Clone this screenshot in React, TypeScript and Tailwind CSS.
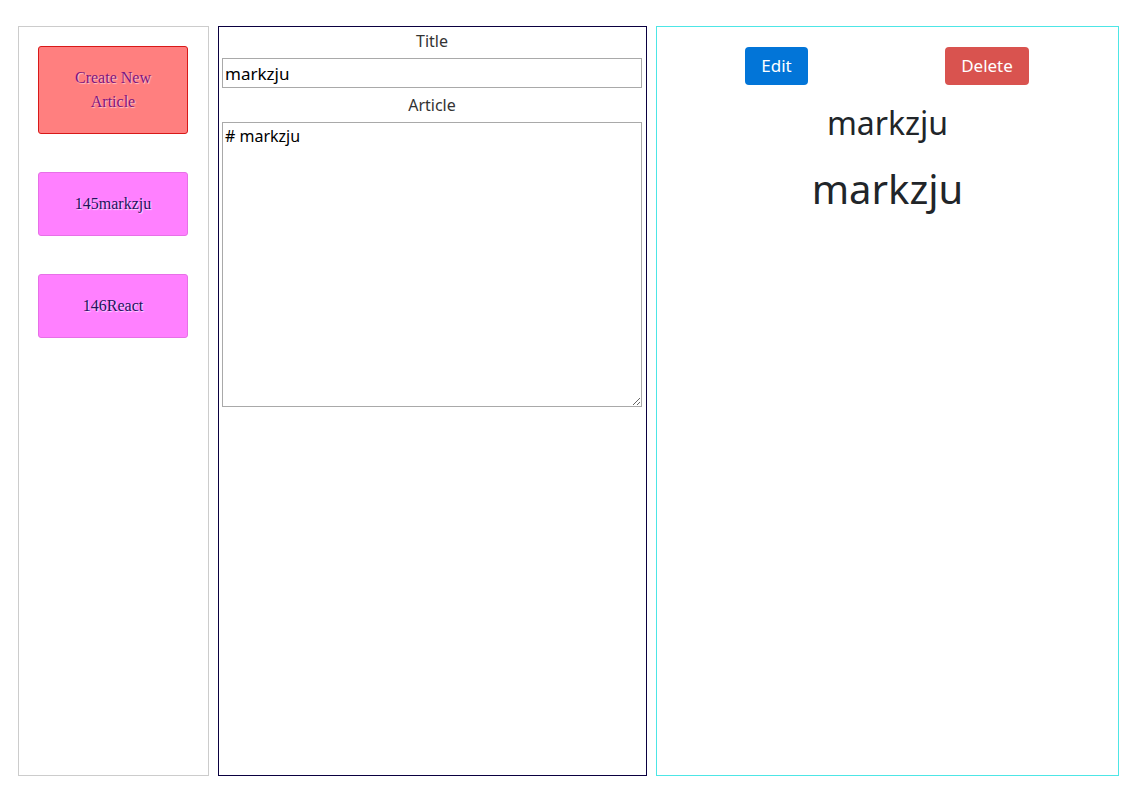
import { useState } from 'react';

const articles = [
  { id: 145, title: 'markzju' },
  { id: 146, title: 'React' },
];

const ArticleButton = ({ label }: { label: string }) => (
  <button className="w-[150px] rounded-[3px] border border-[#e770e7] bg-[#ff80ff] px-[20px] py-[19px] text-[16px] leading-[24px] text-[#24125e] [font-family:'Liberation_Serif',serif] [text-shadow:1px_1px_1px_rgba(255,255,255,0.7)]">
    {label}
  </button>
);

export default function App() {
  const [title, setTitle] = useState('markzju');
  const [body, setBody] = useState('# markzju');

  return (
    <div className="flex h-[794px] bg-white pl-[18px] pt-[26px] [font-family:'Noto_Sans',sans-serif]">
      {/* list */}
      <div className="flex h-[750px] w-[191px] flex-col items-start gap-[38px] border border-[#cccccc] pl-[19px] pt-[19px]">
        <button className="w-[150px] rounded-[3px] border border-[#d81818] bg-[#ff7f7f] px-[30px] py-[19px] text-[16px] leading-[24px] text-[#7d157f] [font-family:'Liberation_Serif',serif] [text-shadow:1px_1px_1px_rgba(255,255,255,0.6)]">
          Create New Article
        </button>
        {articles.map((a) => (
          <ArticleButton key={a.id} label={`${a.id}${a.title}`} />
        ))}
      </div>

      {/* editor */}
      <div className="ml-[9px] flex h-[750px] w-[429px] flex-col border border-[#0a0040] pl-[3px] pr-[4px] pt-[2px]">
        <label className="text-center text-[16px] leading-[24px] text-[#333333]">Title</label>
        <input
          value={title}
          onChange={(e) => setTitle(e.target.value)}
          className="mt-[5px] h-[30px] w-full border border-[#a9a9a9] px-[2px] text-[17px] text-black outline-none"
        />
        <label className="mt-[5px] text-center text-[16px] leading-[24px] text-[#333333]">Article</label>
        <textarea
          value={body}
          onChange={(e) => setBody(e.target.value)}
          className="mt-[5px] h-[285px] w-full resize border border-[#a9a9a9] px-[2px] py-[2px] text-[16px] leading-[22px] text-black outline-none"
        />
      </div>

      {/* preview */}
      <div className="ml-[9px] flex h-[750px] w-[463px] flex-col border border-[#4de6e6]">
        <div className="flex gap-[137px] pl-[88px] pt-[20px]">
          <button className="h-[38px] w-[63px] rounded-[4px] bg-[#0275d8] text-[17px] text-white">Edit</button>
          <button className="h-[38px] w-[84px] rounded-[4px] bg-[#d9534f] text-[17px] text-white">Delete</button>
        </div>
        <h2 className="mt-[19px] text-center text-[32px] leading-[38px] text-[#212529]">{title}</h2>
        <h1 className="mt-[23px] text-center text-[40px] leading-[48px] text-[#212529]">
          {body.replace(/^#\s*/, '')}
        </h1>
      </div>
    </div>
  );
}
